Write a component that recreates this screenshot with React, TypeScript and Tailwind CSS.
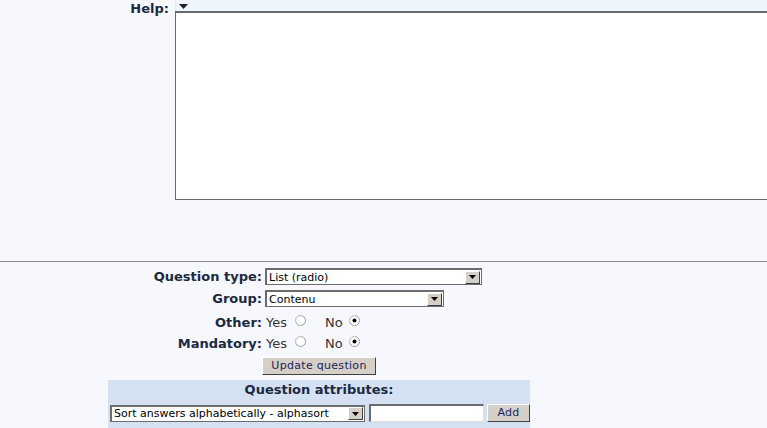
import React from 'react';

const Arrow = () => (
  <div className="w-[15px] h-[13px] bg-[#d4d0c8] border border-t-white border-l-white border-r-[#404040] border-b-[#404040] flex items-center justify-center shrink-0">
    <svg width="7" height="4" viewBox="0 0 7 4">
      <path d="M0 0h7L3.5 4z" fill="#000" />
    </svg>
  </div>
);

const Select = ({ text, width }: { text: string; width: string }) => (
  <div className={`${width} h-[17px] bg-white border-t-2 border-l-2 border-r border-b border-[#6c6c6c] flex items-center justify-between pl-[2px] pr-[1px]`}>
    <span className="text-[11px] leading-[13px] text-black truncate">{text}</span>
    <Arrow />
  </div>
);

const Radio = ({ checked }: { checked?: boolean }) => (
  <svg width="11" height="11" viewBox="0 0 11 11" className="inline-block -mt-[6px]">
    <circle cx="5.5" cy="5.5" r="5" fill="#fff" stroke="#9a9a9a" strokeWidth="1" />
    <path d="M2 8.5A4.3 4.3 0 0 1 8.5 2" fill="none" stroke="#d8d8d8" strokeWidth="1" />
    {checked && <circle cx="5.5" cy="5.5" r="2" fill="#000" />}
  </svg>
);

const Button = ({ label, width }: { label: string; width: string }) => (
  <div className={`${width} h-[18px] bg-[#d4d0c8] border border-t-white border-l-white border-r-[#404040] border-b-[#404040] flex items-center justify-center text-[11px] text-[#1a1f5c] tracking-[0.3px]`}>
    {label}
  </div>
);

const Label = ({ children }: { children: React.ReactNode }) => (
  <div className="w-[263px] pr-[1px] text-right font-bold text-[13px] text-[#1c2a40]">{children}</div>
);

export default function App() {
  return (
    <div className="w-[767px] h-[428px] overflow-hidden bg-[#f7f8fd] font-['DejaVu_Sans',sans-serif] text-[#1c2a40]">
      <div className="flex h-[261px]">
        <div className="w-[175px] shrink-0 pr-[6px] text-right font-bold text-[13px] leading-[16px] pt-[1px]">Help:</div>
        <div className="flex flex-col">
          <div className="h-[11px] w-[600px] bg-[#eef5fd] border-l border-[#e2e8f0] relative">
            <svg width="9" height="5" viewBox="0 0 9 5" className="absolute left-[3px] top-[4px]">
              <path d="M0 0h9L4.5 5z" fill="#222" />
            </svg>
          </div>
          <div className="h-[189px] w-[600px] bg-white border-t-2 border-l border-b border-[#6a6a6a]" />
        </div>
      </div>
      <div className="border-t border-[#888]" />

      <div className="flex flex-col pt-[6px]">
        <div className="flex items-center gap-[2px] h-[17px]">
          <Label>Question type:</Label>
          <Select text="List (radio)" width="w-[217px]" />
        </div>
        <div className="flex items-center gap-[2px] h-[17px] mt-[5px]">
          <Label>Group:</Label>
          <Select text="Contenu" width="w-[179px]" />
        </div>
        <div className="flex items-center h-[20px] mt-[6px] text-[13px]">
          <Label>Other:</Label>
          <span className="ml-[3px] text-[#333]">Yes</span>
          <span className="ml-[8px]"><Radio /></span>
          <span className="ml-[19px] text-[#333]">No</span>
          <span className="ml-[6px]"><Radio checked /></span>
        </div>
        <div className="flex items-center h-[20px] mt-[1px] text-[13px]">
          <Label>Mandatory:</Label>
          <span className="ml-[3px] text-[#333]">Yes</span>
          <span className="ml-[8px]"><Radio /></span>
          <span className="ml-[19px] text-[#333]">No</span>
          <span className="ml-[6px]"><Radio checked /></span>
        </div>
        <div className="ml-[262px] mt-[3px]">
          <Button label="Update question" width="w-[114px]" />
        </div>

        <div className="ml-[108px] w-[422px] h-[60px] mt-[5px] bg-[#d3e1f2] flex flex-col">
          <div className="text-center font-bold text-[13px] leading-[16px] pt-[2px] text-[#1c2a40]">Question attributes:</div>
          <div className="flex items-center mt-[6px] pl-[2px]">
            <Select text="Sort answers alphabetically - alphasort" width="w-[255px]" />
            <div className="w-[115px] h-[18px] ml-[4px] bg-white border-t-2 border-l-2 border-r border-b border-t-[#6c6c6c] border-l-[#6c6c6c] border-r-[#ddd] border-b-[#ddd]" />
            <div className="ml-[3px]">
              <Button label="Add" width="w-[43px]" />
            </div>
          </div>
        </div>
      </div>
    </div>
  );
}
